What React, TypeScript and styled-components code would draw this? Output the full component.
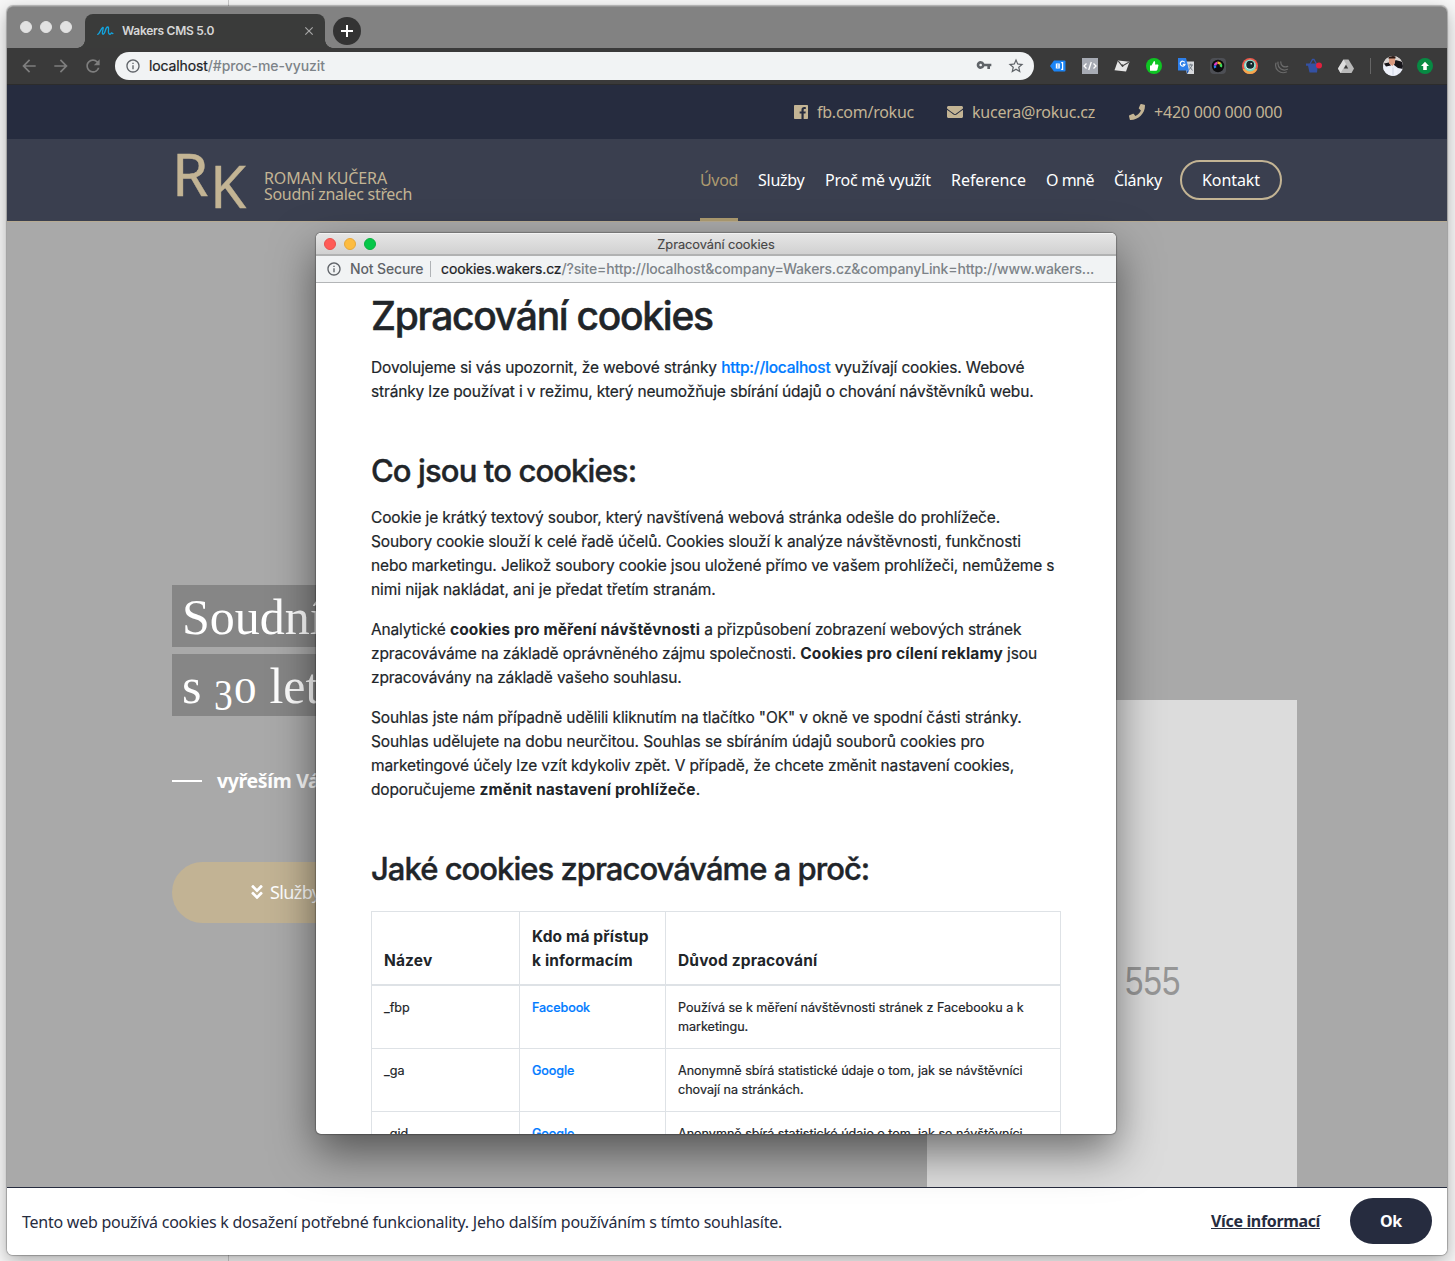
import React from 'react';
import styled, { createGlobalStyle } from 'styled-components';
import { FaAngleDoubleDown, FaEnvelope, FaPhone } from 'react-icons/fa';
import {
  MdArrowBack,
  MdArrowForward,
  MdClose,
  MdInfoOutline,
  MdRefresh,
  MdStarBorder,
  MdVpnKey,
} from 'react-icons/md';

const ui = '"Inter", "Liberation Sans", sans-serif';
const brand = '"Noto Sans", "Open Sans", sans-serif';
const gold = '#c3b494';
const navy = '#262c3f';

const GlobalStyle = createGlobalStyle`
  *, *::before, *::after { box-sizing: border-box; }
  html, body { margin: 0; padding: 0; }
  body { width: 1455px; height: 1261px; overflow: hidden; background: #f6f6f6; }
  svg { display: block; flex: none; }
`;

const Desktop = styled.div`
  width: 1455px;
  height: 1261px;
  padding: 6px 8px 6px 7px;
  overflow: hidden;
  background: linear-gradient(90deg, transparent 228px, #c9c9c9 228px, #c9c9c9 229px, transparent 229px) #f7f7f7;
`;

const BrowserWindow = styled.div`
  position: relative;
  display: flex;
  flex-direction: column;
  width: 1440px;
  height: 1249px;
  border-radius: 6px;
  box-shadow: 0 0 1px 1px rgba(0, 0, 0, 0.25), 0 6px 18px rgba(0, 0, 0, 0.3);
`;

/* ---------- browser chrome ---------- */

const TabStrip = styled.div`
  display: flex;
  height: 42px;
  flex: none;
  padding-left: 13px;
  background: #828282;
  border-top: 1px solid #979797;
  border-radius: 6px 6px 0 0;
`;

const WindowDots = styled.div`
  display: flex;
  gap: 8px;
  width: 65px;
  padding-top: 14px;
`;

const Dot = styled.span<{ $color: string; $edge?: string }>`
  width: 12px;
  height: 12px;
  border-radius: 50%;
  background: ${(p) => p.$color};
  border: 1px solid ${(p) => p.$edge ?? p.$color};
`;

const Tab = styled.div`
  position: relative;
  display: flex;
  align-items: center;
  width: 240px;
  height: 34px;
  margin-top: 7px;
  padding: 0 9px 0 12px;
  border-radius: 8px 8px 0 0;
  background: #3a3b3a;
  color: #d6d6d6;
  font: 600 12px/34px ${ui};
  letter-spacing: -0.27px;

  &::before, &::after {
    content: '';
    position: absolute;
    bottom: 0;
    width: 8px;
    height: 8px;
  }
  &::before { left: -8px; background: radial-gradient(circle at 0 0, transparent 7.5px, #3a3b3a 8px); }
  &::after { right: -8px; background: radial-gradient(circle at 100% 0, transparent 7.5px, #3a3b3a 8px); }
`;

const TabTitle = styled.span`
  flex: 1;
  margin-left: 8px;
`;

const NewTab = styled.div`
  display: grid;
  place-items: center;
  width: 28px;
  height: 28px;
  margin: 10px 0 0 8px;
  border-radius: 50%;
  background: #333;
`;

const Toolbar = styled.div`
  display: flex;
  align-items: center;
  height: 37px;
  flex: none;
  padding: 0 14px 1px 12px;
  background: #3a3a3a;
  border-bottom: 1px solid #2c2c2c;
`;

const HistoryButtons = styled.div`
  display: flex;
  gap: 12px;
  width: 96px;
  color: #7e7e7e;
`;

const AddressBar = styled.div`
  display: flex;
  align-items: center;
  width: 919px;
  height: 28px;
  padding: 0 9px 0 10px;
  border-radius: 14px;
  background: #f1f3f4;
  color: #5f6368;
  font: 500 14px/28px ${ui};
`;

const Url = styled.span<{ $gap: string; $track: string }>`
  flex: 1;
  margin-left: ${(p) => p.$gap};
  color: #7d8388;
  letter-spacing: ${(p) => p.$track};
  white-space: nowrap;
`;

const Host = styled.span`
  color: #202124;
  font-weight: 400;
  letter-spacing: -0.12px;
  -webkit-text-stroke: 0.2px currentColor;
`;

const AddressActions = styled.div`
  display: flex;
  gap: 15px;
`;

const Extensions = styled.div`
  display: flex;
  align-items: center;
  gap: 16px;
  margin-left: 16px;
`;

const Divider = styled.span`
  width: 1px;
  height: 16px;
  margin: 0 12px 0 16px;
  background: #666;
`;

const Profile = styled.div`
  display: flex;
  align-items: center;
  gap: 14px;
`;

/* ---------- website ---------- */

const TopBar = styled.div`
  display: flex;
  justify-content: flex-end;
  align-items: center;
  height: 54px;
  flex: none;
  padding: 0 165px 0 0;
  background: ${navy};
  color: ${gold};
  font: 400 16px/24px ${brand};
`;

const Contact = styled.div<{ $w: number; $track: string }>`
  display: flex;
  align-items: center;
  gap: 9px;
  width: ${(p) => p.$w}px;
  margin-left: 34px;
  white-space: nowrap;
  letter-spacing: ${(p) => p.$track};
`;

const NavBar = styled.div`
  display: flex;
  height: 83px;
  flex: none;
  padding: 0 165px 0 165px;
  background: #3a3f4f;
  border-bottom: 1px solid #b7ab93;
`;

const Monogram = styled.div`
  display: flex;
  width: 92px;
  color: ${gold};
  font: 400 58.5px/58px ${brand};
  -webkit-text-stroke: 0.4px currentColor;
`;

const MonoLetter = styled.span<{ $drop: number; $w: number }>`
  width: ${(p) => p.$w}px;
  padding-top: ${(p) => p.$drop}px;
`;

const LogoText = styled.div`
  flex: 1;
  padding-top: 31px;
  color: ${gold};
  font: 400 16px/16px ${brand};
  letter-spacing: -0.1px;
`;

const LogoSub = styled.div`
  letter-spacing: -0.3px;
`;

const Nav = styled.nav`
  display: flex;
  gap: 20px;
`;

const NavLink = styled.a<{ $w: number; $active?: boolean; $track?: string }>`
  width: ${(p) => p.$w}px;
  height: 82px;
  border-bottom: 3px solid ${(p) => (p.$active ? '#ad9b70' : 'transparent')};
  color: ${(p) => (p.$active ? '#ad9b70' : '#fff')};
  font: 400 16px/82px ${brand};
  letter-spacing: ${(p) => p.$track ?? '-0.25px'};
  white-space: nowrap;
`;

const ContactButton = styled.a`
  width: 102px;
  height: 40px;
  margin: 21px 0 0 -2px;
  border: 2px solid ${gold};
  border-radius: 20px;
  color: #fff;
  font: 400 16px/36px ${brand};
  letter-spacing: -0.1px;
  text-align: center;
`;

const Hero = styled.div`
  display: flex;
  justify-content: space-between;
  flex: 1;
  min-height: 0;
  padding: 0 150px 0 165px;
  background: #a9a9a9;
`;

const HeroCopy = styled.div`
  display: flex;
  flex-direction: column;
  align-items: flex-start;
  padding-top: 363px;
`;

const HeroLine = styled.div`
  width: 300px;
  height: 62px;
  margin-bottom: 7px;
  padding: 1px 10px 0;
  background: #868686;
  color: #fff;
  font: 400 50px/62px "Liberation Serif", serif;
  white-space: nowrap;
`;

const OldstyleDigit = styled.span<{ $size: number; $stretch: number; $drop: number; $gap: number }>`
  display: inline-block;
  margin-right: ${(p) => p.$gap}px;
  font-size: ${(p) => p.$size}px;
  line-height: 40px;
  transform: translateY(${(p) => p.$drop}px) scaleX(${(p) => p.$stretch});
  transform-origin: left center;
`;

const Tagline = styled.div`
  display: flex;
  align-items: center;
  gap: 15px;
  margin-top: 43px;
  color: #fff;
  font: 700 19.5px/30px ${brand};
  letter-spacing: -0.35px;

  &::before { content: ''; width: 30px; height: 2px; background: #fff; }
`;

const ServicesButton = styled.div`
  display: flex;
  align-items: center;
  gap: 4px;
  width: 240px;
  height: 61px;
  margin-top: 66px;
  padding: 0 0 1px 76px;
  border-radius: 31px;
  background: #c2b394;
  color: #fff;
  font: 400 18px/30px ${brand};
  letter-spacing: -0.6px;
`;

const PhotoPlaceholder = styled.div`
  align-self: flex-end;
  width: 370px;
  height: 487px;
  padding: 257px 0 0 198px;
  background: #dcdcdc;
  color: #969696;
  font: 400 41px/48px "Liberation Sans", Arial, sans-serif;
`;

const PlaceholderSize = styled.div`
  transform: scaleX(0.81);
  transform-origin: left center;
`;

const CookieBar = styled.div`
  display: flex;
  align-items: center;
  height: 68px;
  flex: none;
  padding: 0 15px 2px;
  border-top: 1px solid ${navy};
  border-radius: 0 0 6px 6px;
  background: #fff;
  color: ${navy};
  font: 400 16px/24px ${brand};
  letter-spacing: -0.25px;
`;

const CookieMessage = styled.span`
  flex: 1;
  padding-top: 2px;
`;

const MoreInfo = styled.a`
  width: 109px;
  margin-right: 30px;
  font-weight: 700;
  letter-spacing: -0.35px;
  text-decoration: underline;
  white-space: nowrap;
`;

const OkButton = styled.div`
  width: 82px;
  height: 46px;
  border-radius: 23px;
  background: ${navy};
  color: #fff;
  font-weight: 700;
  line-height: 46px;
  text-align: center;
`;

/* ---------- popup window ---------- */

const Popup = styled.div`
  position: absolute;
  left: 309px;
  top: 227px;
  display: flex;
  flex-direction: column;
  width: 800px;
  height: 901px;
  overflow: hidden;
  border-radius: 5px;
  background: #fff;
  box-shadow: 0 0 1px 1px rgba(0, 0, 0, 0.25), 0 18px 44px rgba(0, 0, 0, 0.5);
`;

const PopupTitleBar = styled.div`
  display: grid;
  grid-template-columns: 120px 1fr 120px;
  height: 23px;
  flex: none;
  border-top: 1px solid #f2f2f2;
  border-bottom: 2px solid #b1b2b2;
  background: linear-gradient(#e5e5e5, #d1d1d1);
`;

const PopupDots = styled.div`
  display: flex;
  gap: 8px;
  padding: 4px 0 0 8px;
`;

const PopupTitle = styled.div`
  color: #464646;
  font: 400 12.8px/21px ${ui};
  letter-spacing: -0.05px;
  text-align: center;
  -webkit-text-stroke: 0.15px currentColor;
`;

const PopupAddress = styled.div`
  display: flex;
  align-items: center;
  height: 27px;
  flex: none;
  padding: 0 10px;
  border-bottom: 1px solid #b3b5b7;
  background: #f1f3f4;
  color: #5f6368;
  font: 500 14px/26px ${ui};
`;

const NotSecure = styled.span`
  width: 81px;
  margin-left: 8px;
  border-right: 1px solid #b0b3b6;
  line-height: 16px;
  letter-spacing: -0.13px;
`;

const Article = styled.article`
  padding: 9px 55px 0;
  color: #212529;
  font: 400 15.5px/24px ${ui};
  -webkit-text-stroke: 0.2px currentColor;
`;

const Title = styled.h1`
  margin: 0 0 16px;
  font: 500 39px/48px ${ui};
  letter-spacing: -1.27px;
  -webkit-text-stroke-width: 0.5px;
`;

const Heading = styled.h2<{ $after: number; $track: string }>`
  margin: 48px 0 ${(p) => p.$after}px;
  font: 500 31px/38px ${ui};
  letter-spacing: ${(p) => p.$track};
  -webkit-text-stroke-width: 0.4px;
`;

const Paragraph = styled.p`
  margin: 0 0 16px;
`;

const Line = styled.span<{ $track?: string }>`
  display: block;
  height: 24px;
  white-space: pre;
  letter-spacing: ${(p) => p.$track ?? '-0.145px'};
`;

const Strong = styled.b`
  font-weight: 700;
  letter-spacing: 0.14px;
  -webkit-text-stroke-width: 0;
`;

const Link = styled.a`
  color: #007bff;
  font-weight: 500;
  letter-spacing: -0.2px;
`;

const CookieTable = styled.div`
  display: grid;
  grid-template-columns: 148px 146px 395px;
  width: 690px;
  border: solid #dee2e6;
  border-width: 1px 0 0 1px;
`;

const HeadCell = styled.div`
  display: flex;
  align-items: flex-end;
  height: 74px;
  padding: 13px 0 11px 12px;
  border: solid #dee2e6;
  border-width: 0 1px 2px 0;
  font-weight: 700;
  letter-spacing: 0.15px;
  white-space: pre;
  -webkit-text-stroke-width: 0;
`;

const Cell = styled.div`
  height: 63px;
  padding: 12px 0 12px 12px;
  border: solid #dee2e6;
  border-width: 0 1px 1px 0;
  font-size: 12.6px;
  line-height: 19px;
  letter-spacing: -0.02px;
  white-space: pre;
`;

const TableLink = styled(Link)`
  letter-spacing: -0.12px;
`;

const rows = [
  { name: '_fbp', who: 'Facebook', why: 'Používá se k měření návštěvnosti stránek z Facebooku a k\nmarketingu.' },
  { name: '_ga', who: 'Google', why: 'Anonymně sbírá statistické údaje o tom, jak se návštěvníci\nchovají na stránkách.' },
  { name: '_gid', who: 'Google', why: 'Anonymně sbírá statistické údaje o tom, jak se návštěvníci\nchovají na stránkách.' },
];

/* ---------- small drawings ---------- */

const WakersMark = () => (
  <svg width="17" height="12" viewBox="0 0 17 12" fill="none" stroke="#12a5e0" strokeWidth="1.3" strokeLinecap="round" strokeLinejoin="round">
    <path d="M.8 9.400C2.600 9 4 3 5.800 2.300C7 2 5.200 6.500 5.400 8.300C5.700 10.200 7.400 9 8.200 6C8.800 3.500 9.400 2 10.700 2C12.400 2 10.900 5.500 11.600 8C12.200 9.800 13.600 9.600 14.300 7.900L15.900 8.600" />
  </svg>
);

const FacebookMark = () => (
  <svg width="14" height="16" viewBox="0 0 448 512" fill="currentColor">
    <path d="M448 56.7v398.500c0 13.700-11.100 24.700-24.700 24.700H309.100V306.500h58.200l8.700-67.600h-67v-43.200c0-19.600 5.400-32.900 33.500-32.900h35.800v-60.500c-6.200-.8-27.400-2.700-52.200-2.700-51.600 0-87 31.500-87 89.400v49.900h-58.400v67.600h58.400V480H24.700C11.100 480 0 468.900 0 455.300V56.700C0 43.100 11.100 32 24.700 32h398.500c13.700 0 24.800 11.100 24.800 24.700z" />
  </svg>
);

const TagExt = () => (
  <svg width="16" height="16" viewBox="0 0 16 16">
    <path d="M0 8l4-5.500h10.500q1 0 1 1v9q0 1-1 1H4z" fill="#1a84f5" />
    <path d="M5.800 5.500h4v5h-4z" fill="#fff" />
    <path d="M7 7h1.600M7 9h1.600" stroke="#1a84f5" strokeWidth=".9" />
    <path d="M11.200 4.700h1.400v6.600h-1.400" stroke="#fff" strokeWidth="1.200" fill="none" />
  </svg>
);
const CodeExt = () => (
  <svg width="16" height="16" viewBox="0 0 16 16">
    <path d="M0 0h16v16H0z" fill="#a7abb4" />
    <path d="M4.500 5.500L2 8l2.500 2.500M11.500 5.500L14 8l-2.500 2.500M9.300 4L6.700 12" stroke="#fff" strokeWidth="1.300" fill="none" />
  </svg>
);
const MailExt = () => (
  <svg width="16" height="16" viewBox="0 0 16 16">
    <path d="M4 2.500l11.500 1.200L12 13.500.5 12.200z" fill="#e6e6e6" />
    <path d="M4.300 3.200l4 4.800 6.500-3.800" stroke="#444" strokeWidth="1.100" fill="none" />
    <path d="M8 6.500l.8 2.200" stroke="#444" strokeWidth="1.500" />
  </svg>
);
const ThumbExt = () => (
  <svg width="16" height="16" viewBox="0 0 16 16">
    <circle cx="8" cy="8" r="8" fill="#0ec522" />
    <path d="M4 7.500h1.500L8 3q1.600.2 1 3.500h3q.8.500.3 1.500l-1 4q-.3.800-1.300.8H4z" fill="#fff" />
  </svg>
);
const TranslateExt = () => (
  <svg width="16" height="16" viewBox="0 0 16 16">
    <path d="M6 3.500h10V16H9z" fill="#d8dadd" />
    <path d="M0 0h8l3 12.500H0z" fill="#2d7fea" />
    <path d="M8.500 12.500H11L9.200 16z" fill="#1a56b5" />
    <path d="M6.700 4.300A2.400 2.400 0 1 0 7 6.300H4.800" stroke="#fff" strokeWidth="1.200" fill="none" />
    <path d="M10.500 7h4.500M12.800 5.700V7M14 7q-.7 3-3 4.500M11.500 8.500l3 4" stroke="#68707a" strokeWidth=".9" fill="none" />
  </svg>
);
const CameraExt = () => (
  <svg width="16" height="16" viewBox="0 0 16 16">
    <rect width="16" height="16" rx="4" fill="#4d4f55" />
    <circle cx="8" cy="8" r="6.200" fill="#0c0c0e" />
    <g fill="none" strokeWidth="2.400">
      <path d="M5 7.500a3.200 3.200 0 0 1 2.500-2.700" stroke="#e039c8" />
      <path d="M7.500 4.800A3.200 3.200 0 0 1 10.500 6" stroke="#f1b52c" />
      <path d="M10.500 6a3.200 3.200 0 0 1 .4 3" stroke="#3edb5a" />
      <path d="M5 7.500a3.200 3.200 0 0 0 .4 2.300" stroke="#2b7ff0" />
    </g>
  </svg>
);
const EyeExt = () => (
  <svg width="16" height="16" viewBox="0 0 16 16">
    <circle cx="8" cy="8" r="8" fill="#f0584a" />
    <path d="M.6 11a8 8 0 0 0 14.800 0z" fill="#f4a74c" />
    <circle cx="8" cy="7.500" r="6.100" fill="#7fd8c4" />
    <circle cx="8" cy="7" r="4.600" fill="#e8fbf6" />
    <circle cx="8.200" cy="6.800" r="4" fill="#122c30" />
    <circle cx="9.200" cy="5.800" r=".8" fill="#fff" />
  </svg>
);
const WaveExt = () => (
  <svg width="16" height="16" viewBox="0 0 16 16" fill="none" stroke="#6b6b6b" strokeWidth="1.200" strokeLinecap="round">
    <path d="M2 5C0 11.500 6.500 16.500 12.500 14M4 4.200C3.200 10 8.500 13.500 13.500 11.300M6.800 3.800c-.3 4 3 6 7 4.600" />
  </svg>
);
const BasketExt = () => (
  <svg width="16" height="16" viewBox="0 0 16 16">
    <path d="M0 5.500h13v2.300h-1.200L11 14.500H3.500L2 7.800H0z" fill="#3451a3" />
    <path d="M4 6L6.500 1.500h1.500L10.500 6" stroke="#3451a3" strokeWidth="1.300" fill="none" />
    <circle cx="13" cy="7.500" r="3" fill="#e2203f" />
  </svg>
);
const DriveExt = () => (
  <svg width="16" height="16" viewBox="0 0 16 16">
    <path d="M5.500 1.500h5L16 10.500 13.500 15h-11L0 10.500z" fill="#b9b9b9" />
    <path d="M5.500 1.500L8 6l-5.500 9L0 10.500z" fill="#dedede" />
    <path d="M8 6.800l2.200 3.700H5.800z" fill="#3a3a3a" />
  </svg>
);
const Avatar = () => (
  <svg width="20" height="20" viewBox="0 0 20 20">
    <clipPath id="face"><circle cx="10" cy="10" r="10" /></clipPath>
    <g clipPath="url(#face)">
      <path d="M0 0h20v20H0z" fill="#e9edf7" />
      <path d="M0 0h20v9H0z" fill="#d8d2cf" />
      <path d="M12.500 4l7.500 2v7l-5-1-4-3zM1 7.500l5-1 2 3-5 1z" fill="#17151a" />
      <path d="M6 2h6v5l-2.500 3L6 7.500z" fill="#d99a80" />
      <path d="M5.500 0h7v2.500h-7z" fill="#2a1813" />
      <path d="M0 11l10 .5 4 1V20H0z" fill="#eef1fa" />
      <path d="M10 11.500v9" stroke="#cbd3e3" />
    </g>
  </svg>
);
const UpdateBadge = () => (
  <svg width="16" height="16" viewBox="0 0 16 16">
    <circle cx="8" cy="8" r="8" fill="#078a43" />
    <path d="M8 3.800l4 4.200H9.800v4H6.200V8H4z" fill="#fff" />
  </svg>
);

const BrowserChrome = () => (
  <>
    <TabStrip>
      <WindowDots>
        <Dot $color="#e2e2e2" />
        <Dot $color="#e2e2e2" />
        <Dot $color="#e2e2e2" />
      </WindowDots>
      <Tab>
        <WakersMark />
        <TabTitle>Wakers CMS 5.0</TabTitle>
        <MdClose size={14} color="#a8a8a8" />
      </Tab>
      <NewTab>
        <svg width="12" height="12" viewBox="0 0 12 12" stroke="#fff" strokeWidth="2">
          <path d="M6 0v12M0 6h12" />
        </svg>
      </NewTab>
    </TabStrip>
    <Toolbar>
      <HistoryButtons>
        <MdArrowBack size={20} />
        <MdArrowForward size={20} />
        <MdRefresh size={20} />
      </HistoryButtons>
      <AddressBar>
        <MdInfoOutline size={16} />
        <Url $gap="8px" $track="-0.1px">
          <Host>localhost</Host>/#proc-me-vyuzit
        </Url>
        <AddressActions>
          <MdVpnKey size={16} />
          <MdStarBorder size={18} />
        </AddressActions>
      </AddressBar>
      <Extensions>
        <TagExt />
        <CodeExt />
        <MailExt />
        <ThumbExt />
        <TranslateExt />
        <CameraExt />
        <EyeExt />
        <WaveExt />
        <BasketExt />
        <DriveExt />
      </Extensions>
      <Divider />
      <Profile>
        <Avatar />
        <UpdateBadge />
      </Profile>
    </Toolbar>
  </>
);

const Website = () => (
  <>
    <TopBar>
      <Contact $w={119} $track="-0.25px">
        <FacebookMark />
        fb.com/rokuc
      </Contact>
      <Contact $w={148} $track="-0.22px">
        <FaEnvelope size={16} />
        kucera@rokuc.cz
      </Contact>
      <Contact $w={153} $track="-0.2px">
        <FaPhone size={16} />
        +420 000 000 000
      </Contact>
    </TopBar>
    <NavBar>
      <Monogram>
        <MonoLetter $drop={5} $w={38}>R</MonoLetter>
        <MonoLetter $drop={17} $w={40}>K</MonoLetter>
      </Monogram>
      <LogoText>
        ROMAN KUČERA
        <LogoSub>Soudní znalec střech</LogoSub>
      </LogoText>
      <Nav>
        <NavLink $w={38} $active $track="-0.34px">Úvod</NavLink>
        <NavLink $w={47}>Služby</NavLink>
        <NavLink $w={106}>Proč mě využít</NavLink>
        <NavLink $w={75} $track="-0.05px">Reference</NavLink>
        <NavLink $w={48} $track="-0.5px">O mně</NavLink>
        <NavLink $w={48} $track="-0.35px">Články</NavLink>
        <ContactButton>Kontakt</ContactButton>
      </Nav>
    </NavBar>
    <Hero>
      <HeroCopy>
        <HeroLine>Soudní</HeroLine>
        <HeroLine>
          s <OldstyleDigit $size={44} $stretch={0.85} $drop={7} $gap={-2}>3</OldstyleDigit>
          <OldstyleDigit $size={36} $stretch={1.25} $drop={0} $gap={5}>0</OldstyleDigit> let
        </HeroLine>
        <Tagline>vyřeším Vás</Tagline>
        <ServicesButton>
          <FaAngleDoubleDown size={18} />
          Služby
        </ServicesButton>
      </HeroCopy>
      <PhotoPlaceholder>
        <PlaceholderSize>555</PlaceholderSize>
      </PhotoPlaceholder>
    </Hero>
    <CookieBar>
      <CookieMessage>
        Tento web používá cookies k dosažení potřebné funkcionality. Jeho dalším používáním s tímto souhlasíte.
      </CookieMessage>
      <MoreInfo>Více informací</MoreInfo>
      <OkButton>Ok</OkButton>
    </CookieBar>
  </>
);

const CookiePopup = () => (
  <Popup>
    <PopupTitleBar>
      <PopupDots>
        <Dot $color="#ff5b57" $edge="#e8504b" />
        <Dot $color="#fdbc40" $edge="#e5a73a" />
        <Dot $color="#06c749" $edge="#0bb040" />
      </PopupDots>
      <PopupTitle>Zpracování cookies</PopupTitle>
    </PopupTitleBar>
    <PopupAddress>
      <MdInfoOutline size={16} />
      <NotSecure>Not Secure</NotSecure>
      <Url $gap="10px" $track="-0.16px">
        <Host>cookies.wakers.cz</Host>/?site=http://localhost&amp;company=Wakers.cz&amp;companyLink=http://www.wakers...
      </Url>
    </PopupAddress>
    <Article>
      <Title>Zpracování cookies</Title>
      <Paragraph>
        <Line>
          {'Dovolujeme si vás upozornit, že webové stránky '}
          <Link>http://localhost</Link>
          {' využívají cookies. Webové'}
        </Line>
        <Line>stránky lze používat i v režimu, který neumožňuje sbírání údajů o chování návštěvníků webu.</Line>
      </Paragraph>
      <Heading $after={16} $track="-0.88px">Co jsou to cookies:</Heading>
      <Paragraph>
        <Line>Cookie je krátký textový soubor, který navštívená webová stránka odešle do prohlížeče.</Line>
        <Line>Soubory cookie slouží k celé řadě účelů. Cookies slouží k analýze návštěvnosti, funkčnosti</Line>
        <Line>nebo marketingu. Jelikož soubory cookie jsou uložené přímo ve vašem prohlížeči, nemůžeme s</Line>
        <Line $track="-0.08px">nimi nijak nakládat, ani je předat třetím stranám.</Line>
      </Paragraph>
      <Paragraph>
        <Line>
          {'Analytické '}
          <Strong>cookies pro měření návštěvnosti</Strong>
          {' a přizpůsobení zobrazení webových stránek'}
        </Line>
        <Line>
          {'zpracováváme na základě oprávněného zájmu společnosti. '}
          <Strong>Cookies pro cílení reklamy</Strong>
          {' jsou'}
        </Line>
        <Line $track="-0.18px">zpracovávány na základě vašeho souhlasu.</Line>
      </Paragraph>
      <Paragraph>
        <Line $track="-0.115px">Souhlas jste nám případně udělili kliknutím na tlačítko "OK" v okně ve spodní části stránky.</Line>
        <Line $track="-0.105px">Souhlas udělujete na dobu neurčitou. Souhlas se sbíráním údajů souborů cookies pro</Line>
        <Line $track="-0.13px">marketingové účely lze vzít kdykoliv zpět. V případě, že chcete změnit nastavení cookies,</Line>
        <Line>
          {'doporučujeme '}
          <Strong>změnit nastavení prohlížeče</Strong>.
        </Line>
      </Paragraph>
      <Heading $after={23} $track="-0.98px">Jaké cookies zpracováváme a proč:</Heading>
      <CookieTable>
        <HeadCell>Název</HeadCell>
        <HeadCell>{'Kdo má přístup\nk informacím'}</HeadCell>
        <HeadCell>Důvod zpracování</HeadCell>
        {rows.map((row) => (
          <React.Fragment key={row.name}>
            <Cell>{row.name}</Cell>
            <Cell>
              <TableLink>{row.who}</TableLink>
            </Cell>
            <Cell>{row.why}</Cell>
          </React.Fragment>
        ))}
      </CookieTable>
    </Article>
  </Popup>
);

export default function App() {
  return (
    <>
      <GlobalStyle />
      <Desktop>
        <BrowserWindow>
          <BrowserChrome />
          <Website />
          <CookiePopup />
        </BrowserWindow>
      </Desktop>
    </>
  );
}
